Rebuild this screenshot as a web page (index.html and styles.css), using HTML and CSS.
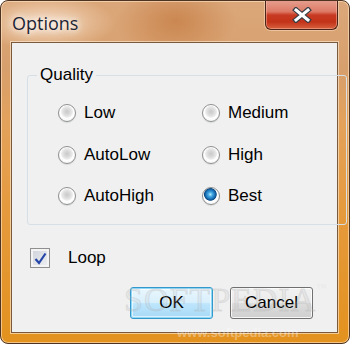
FILE: index.html
```html
<!DOCTYPE html>
<html lang="en">
<head>
  <meta charset="UTF-8" />
  <title>Options</title>
  <link rel="stylesheet" href="styles.css">
</head>
<body>
  <div class="window">
    <div class="titlebar">
      <span class="title">Options</span>
      <button class="close" aria-label="Close">
        <svg width="20" height="16" viewBox="0 0 20 16">
          <path d="M4 3 L16 13 M16 3 L4 13" stroke="#3b3f47" stroke-width="5.5" stroke-linecap="square" fill="none"/>
          <path d="M4 3 L16 13 M16 3 L4 13" stroke="#ffffff" stroke-width="3" stroke-linecap="square" fill="none"/>
        </svg>
      </button>
    </div>

    <div class="client">
      <fieldset class="group">
        <legend>Quality</legend>
        <div class="options">
          <label class="option"><span class="radio"></span>Low</label>
          <label class="option"><span class="radio"></span>Medium</label>
          <label class="option"><span class="radio"></span>AutoLow</label>
          <label class="option"><span class="radio"></span>High</label>
          <label class="option"><span class="radio"></span>AutoHigh</label>
          <label class="option"><span class="radio checked"></span>Best</label>
        </div>
      </fieldset>

      <label class="loop">
        <span class="checkbox">
          <svg width="13" height="13" viewBox="0 0 13 13">
            <path d="M1.5 7 L5 11 L11.5 1.5" stroke="#2546a8" stroke-width="2.2" fill="none"/>
          </svg>
        </span>
        Loop
      </label>

      <div class="buttons">
        <button class="btn default">OK</button>
        <button class="btn">Cancel</button>
      </div>

      <div class="watermark">SOFTPEDIA<span class="tm">™</span></div>
    </div>
    <div class="site">www.softpedia.com</div>
  </div>
</body>
</html>
```

FILE: styles.css
```css
body {
  margin: 0;
  padding: 0;
  background: #ffffff;
}

.window {
  position: relative;
  width: 350px;
  height: 344px;
  box-sizing: border-box;
  border: 1px solid #4e3420;
  border-radius: 8px;
  padding: 0 11px 10px 10px;
  display: flex;
  flex-direction: column;
  background:
    radial-gradient(ellipse 60px 40px at 175px 20px, rgba(190, 110, 50, 0.55), rgba(190, 110, 50, 0)),
    radial-gradient(ellipse 70px 28px at 45px 22px, rgba(255, 235, 215, 0.75), rgba(255, 235, 215, 0)),
    linear-gradient(180deg, #dba77a 0%, #d79f6c 20%, #e3a25c 35%, #e59a3e 60%, #e3921e 100%);
  box-shadow: inset 0 0 0 1px rgba(255, 230, 200, 0.6);
  overflow: hidden;
}

.titlebar {
  height: 41px;
  display: flex;
  justify-content: space-between;
  align-items: flex-start;
}

.title {
  margin: 10px 0 0 1px;
  font-family: "Open Sans", sans-serif;
  font-size: 18px;
  line-height: 24px;
  color: #1c2536;
  text-shadow: 0 0 6px #fff, 0 0 10px rgba(255, 255, 255, 0.9), 0 0 16px rgba(255, 255, 255, 0.7);
}

.close {
  width: 73px;
  height: 30px;
  margin-top: -1px;
  padding: 0;
  border: 1px solid #4a2418;
  border-top: none;
  border-radius: 0 0 6px 6px;
  display: flex;
  align-items: center;
  justify-content: center;
  background: linear-gradient(180deg, #e6a090 0%, #dd7a66 40%, #c93a22 52%, #c23319 75%, #d9603e 100%);
  box-shadow: inset 0 0 0 1px rgba(255, 200, 180, 0.45), 0 0 0 1px rgba(255, 225, 200, 0.5);
}

.client {
  position: relative;
  flex: 1;
  background: #f0f0f0;
  border: 1px solid #7b5a3c;
  box-shadow: 0 0 0 1px rgba(255, 240, 220, 0.6);
  font-family: "Liberation Sans", Arial, sans-serif;
  font-size: 17px;
  color: #000;
}

.group {
  margin: 22px 17px 0 15px;
  padding: 18px 0 18px 0;
  border: 1px solid #d5dfe5;
  border-radius: 3px;
}

.group legend {
  margin-left: 9px;
  padding: 0 3px;
  line-height: 20px;
}

.options {
  display: grid;
  grid-template-columns: 144px 144px;
  grid-auto-rows: 20px;
  row-gap: 21.5px;
  padding-left: 30px;
}

.option {
  display: flex;
  align-items: center;
  gap: 8px;
  line-height: 20px;
}

.radio {
  width: 18px;
  height: 18px;
  box-sizing: border-box;
  border-radius: 50%;
  border: 1px solid #8e8f8f;
  background:
    radial-gradient(circle at 50% 42%, #c9c9c9 0, #dcdcdc 28%, #eeeeee 46%, #ffffff 52%, #f0f0f0 100%);
  box-shadow: 0 1px 1px rgba(0, 0, 0, 0.1);
}

.radio.checked {
  background:
    radial-gradient(circle at 46% 40%, #b5ecff 0, #3fa4e0 18%, #1a6fb6 36%, #0d4a84 46%, #ffffff 52%, #f0f0f0 100%);
}

.loop {
  display: flex;
  align-items: center;
  gap: 18px;
  margin: 23px 0 0 18px;
  height: 20px;
}

.checkbox {
  width: 20px;
  height: 20px;
  box-sizing: border-box;
  border: 1px solid #8f8f8f;
  background: linear-gradient(135deg, #cfd3da, #eef0f3);
  box-shadow: inset 0 0 0 2px #f4f4f4;
  display: flex;
  align-items: center;
  justify-content: center;
}

.buttons {
  display: flex;
  justify-content: flex-end;
  gap: 17px;
  margin: 19px 24px 0 0;
}

.btn {
  width: 83px;
  height: 32px;
  padding: 0;
  font-family: "Liberation Sans", Arial, sans-serif;
  font-size: 17px;
  color: #000;
  border: 1px solid #707070;
  border-radius: 3px;
  background: linear-gradient(180deg, #f2f2f2 0%, #ebebeb 48%, #dddddd 52%, #cfcfcf 100%);
  box-shadow: inset 0 0 0 1px rgba(255, 255, 255, 0.8);
}

.btn.default {
  border-color: #3399cc;
  background: linear-gradient(180deg, #eaf6fd 0%, #d9f0fc 48%, #bee6fd 52%, #a7d9f5 100%);
  box-shadow: inset 0 0 0 1px #8fd8f8, inset 0 0 0 2px rgba(255, 255, 255, 0.6);
}

.watermark {
  position: absolute;
  left: 112px;
  top: 238px;
  font-family: "Liberation Serif", serif;
  font-size: 34px;
  letter-spacing: 1px;
  color: rgba(190, 190, 190, 0.2);
  -webkit-text-stroke: 1px rgba(160, 160, 160, 0.22);
  pointer-events: none;
}

.watermark .tm {
  font-size: 10px;
  vertical-align: 20px;
  -webkit-text-stroke: 0;
}

.site {
  position: absolute;
  left: 176px;
  top: 324px;
  font-family: "Liberation Sans", Arial, sans-serif;
  font-size: 13px;
  font-weight: bold;
  color: rgba(255, 255, 255, 0.35);
  pointer-events: none;
}
```
